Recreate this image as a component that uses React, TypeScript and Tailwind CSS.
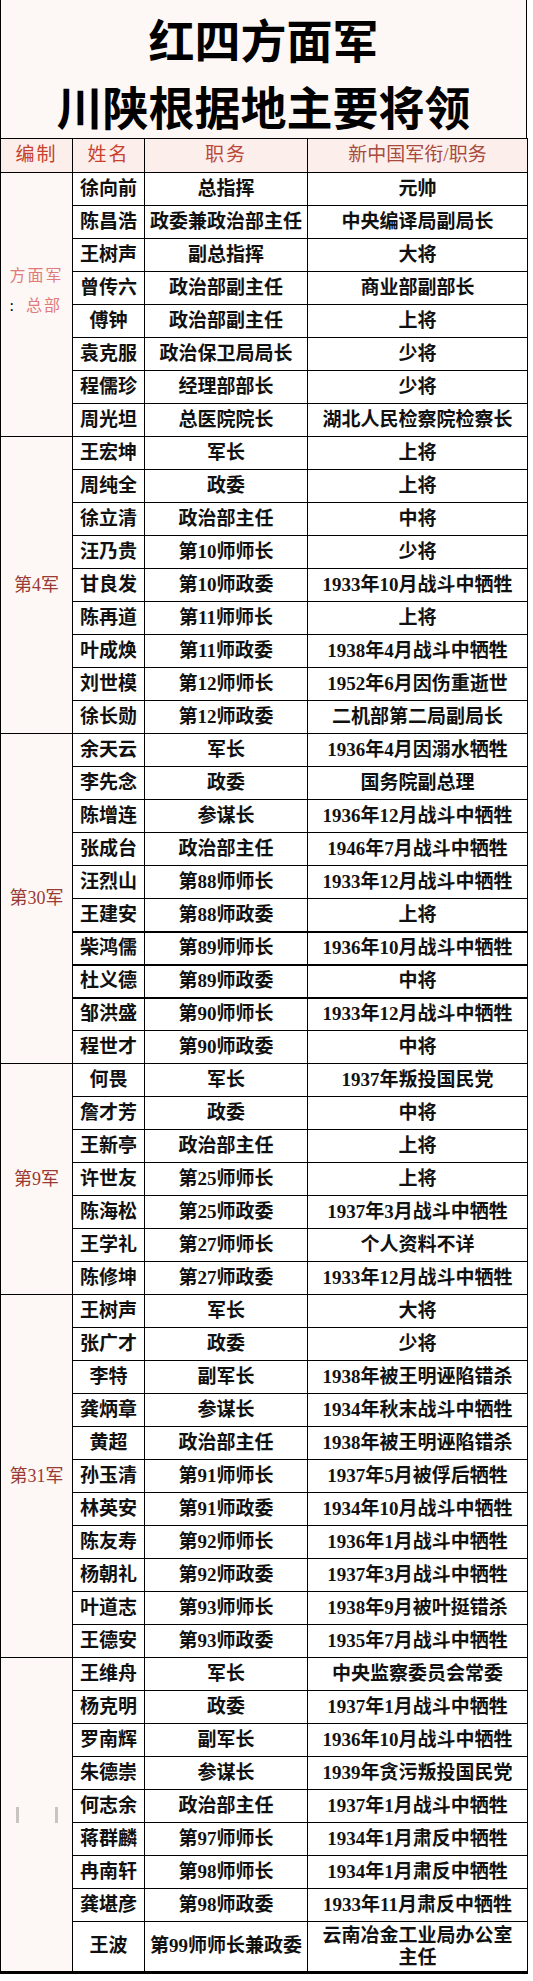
import React from "react";

type Row = [string, string, string];

type Group = {
  key: string;
  label: React.ReactNode;
  rows: Row[];
};

const groups: Group[] = [
  {
    key: "hq",
    label: (
      <div className="flex flex-col items-start pb-[28px] text-[16px] font-normal leading-[30px] tracking-[2px] text-[#e07b7b]">
        <span>方面军</span>
        <span>
          <span className="text-black">:</span>
          <span className="ml-[10px]">总部</span>
        </span>
      </div>
    ),
    rows: [
      ["徐向前", "总指挥", "元帅"],
      ["陈昌浩", "政委兼政治部主任", "中央编译局副局长"],
      ["王树声", "副总指挥", "大将"],
      ["曾传六", "政治部副主任", "商业部副部长"],
      ["傅钟", "政治部副主任", "上将"],
      ["袁克服", "政治保卫局局长", "少将"],
      ["程儒珍", "经理部部长", "少将"],
      ["周光坦", "总医院院长", "湖北人民检察院检察长"],
    ],
  },
  {
    key: "4",
    label: "第4军",
    rows: [
      ["王宏坤", "军长", "上将"],
      ["周纯全", "政委", "上将"],
      ["徐立清", "政治部主任", "中将"],
      ["汪乃贵", "第10师师长", "少将"],
      ["甘良发", "第10师政委", "1933年10月战斗中牺牲"],
      ["陈再道", "第11师师长", "上将"],
      ["叶成焕", "第11师政委", "1938年4月战斗中牺牲"],
      ["刘世模", "第12师师长", "1952年6月因伤重逝世"],
      ["徐长勋", "第12师政委", "二机部第二局副局长"],
    ],
  },
  {
    key: "30",
    label: "第30军",
    rows: [
      ["余天云", "军长", "1936年4月因溺水牺牲"],
      ["李先念", "政委", "国务院副总理"],
      ["陈增连", "参谋长", "1936年12月战斗中牺牲"],
      ["张成台", "政治部主任", "1946年7月战斗中牺牲"],
      ["汪烈山", "第88师师长", "1933年12月战斗中牺牲"],
      ["王建安", "第88师政委", "上将"],
      ["柴鸿儒", "第89师师长", "1936年10月战斗中牺牲"],
      ["杜义德", "第89师政委", "中将"],
      ["邹洪盛", "第90师师长", "1933年12月战斗中牺牲"],
      ["程世才", "第90师政委", "中将"],
    ],
  },
  {
    key: "9",
    label: "第9军",
    rows: [
      ["何畏", "军长", "1937年叛投国民党"],
      ["詹才芳", "政委", "中将"],
      ["王新亭", "政治部主任", "上将"],
      ["许世友", "第25师师长", "上将"],
      ["陈海松", "第25师政委", "1937年3月战斗中牺牲"],
      ["王学礼", "第27师师长", "个人资料不详"],
      ["陈修坤", "第27师政委", "1933年12月战斗中牺牲"],
    ],
  },
  {
    key: "31",
    label: "第31军",
    rows: [
      ["王树声", "军长", "大将"],
      ["张广才", "政委", "少将"],
      ["李特", "副军长", "1938年被王明诬陷错杀"],
      ["龚炳章", "参谋长", "1934年秋末战斗中牺牲"],
      ["黄超", "政治部主任", "1938年被王明诬陷错杀"],
      ["孙玉清", "第91师师长", "1937年5月被俘后牺牲"],
      ["林英安", "第91师政委", "1934年10月战斗中牺牲"],
      ["陈友寿", "第92师师长", "1936年1月战斗中牺牲"],
      ["杨朝礼", "第92师政委", "1937年3月战斗中牺牲"],
      ["叶道志", "第93师师长", "1938年9月被叶挺错杀"],
      ["王德安", "第93师政委", "1935年7月战斗中牺牲"],
    ],
  },
  {
    key: "33",
    label: (
      <div className="flex items-center gap-[36px]">
        <span className="h-[16px] w-[3px] bg-[#c9c4c2]" />
        <span className="h-[16px] w-[3px] bg-[#c9c4c2]" />
      </div>
    ),
    rows: [
      ["王维舟", "军长", "中央监察委员会常委"],
      ["杨克明", "政委", "1937年1月战斗中牺牲"],
      ["罗南辉", "副军长", "1936年10月战斗中牺牲"],
      ["朱德崇", "参谋长", "1939年贪污叛投国民党"],
      ["何志余", "政治部主任", "1937年1月战斗中牺牲"],
      ["蒋群麟", "第97师师长", "1934年1月肃反中牺牲"],
      ["冉南轩", "第98师师长", "1934年1月肃反中牺牲"],
      ["龚堪彦", "第98师政委", "1933年11月肃反中牺牲"],
      ["王波", "第99师师长兼政委", "云南冶金工业局办公室主任"],
    ],
  },
];

// rows drawn with a heavier rule underneath
const heavy = new Set(["王建安", "柴鸿儒", "杜义德"]);

const cell = "border border-black p-0 text-center align-middle whitespace-nowrap";

export default function App() {
  return (
    <div className="min-h-[1981px] bg-white font-['Liberation_Serif','Noto_Sans_CJK_SC',serif] text-[#111]">
      <div className="w-[527px]">
        {/* Title */}
        <div className="flex h-[138px] flex-col items-center border-x border-black bg-[#fdf7f5] pt-[5px] font-['Noto_Sans_CJK_SC',sans-serif] text-[46px] font-bold leading-[67px] text-black">
          <div>红四方面军</div>
          <div>川陕根据地主要将领</div>
        </div>

        <table className="w-[527px] table-fixed border-collapse">
          <colgroup>
            <col className="w-[72px]" />
            <col className="w-[72px]" />
            <col className="w-[163px]" />
            <col className="w-[220px]" />
          </colgroup>
          <thead>
            <tr className="h-[34px] bg-[#fcefeb] text-[19px] font-normal tracking-[2px] text-[#c8412f]">
              <th className={`${cell} font-normal`}>编制</th>
              <th className={`${cell} font-normal`}>姓名</th>
              <th className={`${cell} font-normal text-[#b9473a]`}>职务</th>
              <th className={`${cell} font-normal tracking-[0px] text-[#a94a3f]`}>新中国军衔/职务</th>
            </tr>
          </thead>
          <tbody className="text-[19px] font-bold">
            {groups.map((g) =>
              g.rows.map((r, i) => {
                const last = r[0] === "王波";
                const thick = heavy.has(r[0]) ? "border-b-2" : "";
                const bottom = last ? "border-b-[3px]" : "";
                return (
                  <tr key={g.key + r[0] + i} className={last ? "h-[51px]" : "h-[33px]"}>
                    {i === 0 && (
                      <td
                        rowSpan={g.rows.length}
                        className={`${cell} bg-[#fdf7f5] text-[18px] font-normal text-[#9a3a34] ${
                          g.key === "33" ? "border-b-[3px]" : ""
                        }`}
                      >
                        <div className="flex items-center justify-center">{g.label}</div>
                      </td>
                    )}
                    <td className={`${cell} ${thick} ${bottom}`}>{r[0]}</td>
                    <td className={`${cell} ${thick} ${bottom}`}>{r[1]}</td>
                    <td className={`${cell} ${thick} ${bottom} ${last ? "whitespace-normal px-[6px] leading-[22px]" : ""}`}>
                      {last ? (
                        <div className="flex flex-col items-center">
                          <span>云南冶金工业局办公室</span>
                          <span>主任</span>
                        </div>
                      ) : (
                        r[2]
                      )}
                    </td>
                  </tr>
                );
              })
            )}
          </tbody>
        </table>
      </div>
    </div>
  );
}
